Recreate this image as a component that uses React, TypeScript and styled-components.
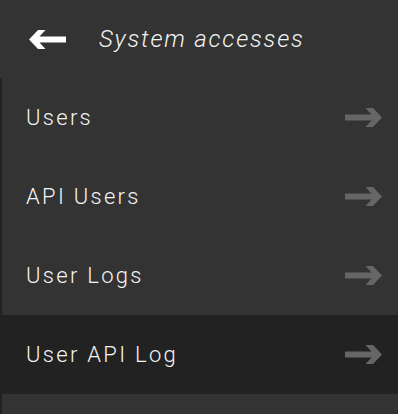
import styled, { createGlobalStyle } from "styled-components";

const GlobalStyle = createGlobalStyle`
    html, body {
        margin: 0;
        padding: 0;
        background: #333333;
    }
    body {
        font-family: Roboto, "Liberation Sans", sans-serif;
    }
`;

const Wrapper = styled.div`
    width: 398px;
    height: 414px;
    background: #333333;
    display: flex;
    flex-direction: column;
    overflow: hidden;
`;

const Header = styled.div`
    height: 78px;
    display: flex;
    align-items: center;
    padding-left: 29px;
    gap: 33px;
    box-sizing: border-box;
`;

const Title = styled.h1`
    margin: 0;
    font-size: 24px;
    font-weight: 300;
    font-style: italic;
    letter-spacing: 1.8px;
    color: #f4f4f4;
`;

const Menu = styled.ul`
    flex: 1;
    margin: 0;
    padding: 0;
    list-style: none;
    border-left: 2px solid #222222;
`;

const Item = styled.li<{ $active?: boolean }>`
    height: 79px;
    display: flex;
    align-items: center;
    justify-content: space-between;
    padding: 0 16px 0 24px;
    background: ${(p) => (p.$active ? "#222222" : "transparent")};
    color: #f4f4f4;
    font-size: 22px;
    font-weight: 300;
    letter-spacing: 2.3px;
    cursor: pointer;
`;

function Arrow({ color, flip }: { color: string; flip?: boolean }) {
    return (
        <svg
            width="37"
            height="19"
            viewBox="0 0 37 19"
            style={flip ? { transform: "scaleX(-1)" } : undefined}
        >
            <polygon
                fill={color}
                points="0,6.5 26.5,6.5 20.5,0 28,0 37,9.5 28,19 20.5,19 26.5,12.5 0,12.5"
            />
        </svg>
    );
}

const items = ["Users", "API Users", "User Logs", "User API Log"];

export default function App() {
    return (
        <>
            <GlobalStyle />
            <Wrapper>
                <Header>
                    <Arrow color="#ffffff" flip />
                    <Title>System accesses</Title>
                </Header>
                <Menu>
                    {items.map((label) => (
                        <Item key={label} $active={label === "User API Log"}>
                            <span>{label}</span>
                            <Arrow color="#666666" />
                        </Item>
                    ))}
                </Menu>
            </Wrapper>
        </>
    );
}
